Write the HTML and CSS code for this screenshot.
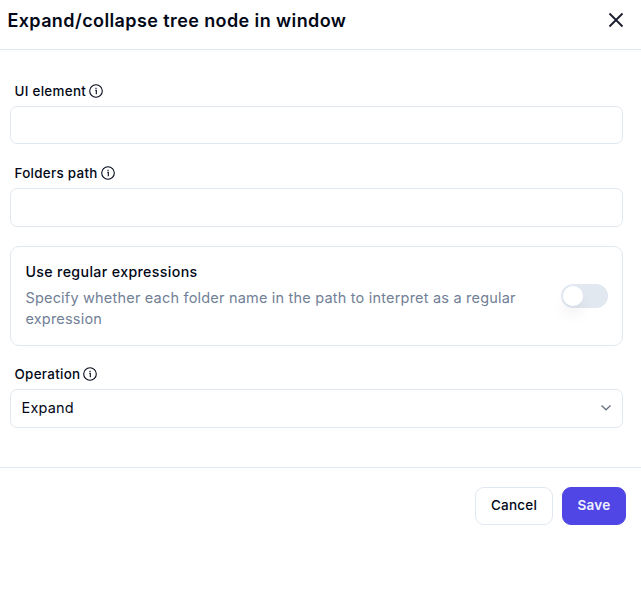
FILE: index.html
```html
<!DOCTYPE html>
<html lang="en">
<head>
<meta charset="utf-8">
<title>Expand/collapse tree node in window</title>
<link rel="stylesheet" href="styles.css">
</head>
<body>
<header class="header">
  <h1 class="title">Expand/collapse tree node in window</h1>
  <button class="close" aria-label="Close"><svg width="16" height="16" viewBox="0 0 16 16"><path d="M1.5 1.5l13 13M14.5 1.5l-13 13"/></svg></button>
</header>
<main class="form">
  <div class="label">UI element <svg class="info" viewBox="0 0 14 14"><circle cx="7" cy="7" r="6.3"/><path d="M6.2 6.3h1.1v3.9M7 3.7v1.2"/></svg></div>
  <div class="field first"></div>
  <div class="label">Folders path <svg class="info" viewBox="0 0 14 14"><circle cx="7" cy="7" r="6.3"/><path d="M6.2 6.3h1.1v3.9M7 3.7v1.2"/></svg></div>
  <div class="field"></div>
  <section class="card">
    <div class="copy">
      <h2 class="card-title">Use regular expressions</h2>
      <p class="description">Specify whether each folder name in the path to interpret as a regular expression</p>
    </div>
    <div class="switch"><span class="thumb"></span></div>
  </section>
  <div class="label">Operation <svg class="info" viewBox="0 0 14 14"><circle cx="7" cy="7" r="6.3"/><path d="M6.2 6.3h1.1v3.9M7 3.7v1.2"/></svg></div>
  <div class="field select"><span>Expand</span><svg class="chevron" viewBox="0 0 12 8"><path d="M1.5 1.5l4.5 4.3 4.5-4.3"/></svg></div>
</main>
<footer class="footer">
  <button class="button cancel">Cancel</button>
  <button class="button save">Save</button>
</footer>
</body>
</html>
```
FILE: styles.css
```css
* { box-sizing: border-box; }
body { margin: 0; background: #fff; color: #020817; font-family: Inter, sans-serif; }
h1, h2, p { margin: 0; }
button { font-family: inherit; }
svg { fill: none; stroke: currentColor; }
.header { height: 50px; display: flex; align-items: flex-start; justify-content: space-between; padding: 8px 17px 0 7.4px; border-bottom: 1px solid #e2e8f0; }
.title { font-size: 18px; line-height: 25px; font-weight: 600; letter-spacing: 0.4px; }
.close { display: flex; border: 0; padding: 0; margin-top: 4px; background: none; color: #1c2030; }
.close svg { stroke-width: 1.9; }
.form { height: 418px; padding: 31px 18px 0 10px; border-bottom: 1px solid #e2e8f0; }
.label { display: flex; align-items: center; gap: 3px; height: 20px; margin-bottom: 5px; padding-left: 4.5px; font-size: 13.4px; font-weight: 500; letter-spacing: 0.3px; }
.info { width: 14px; height: 14px; stroke-width: 1.1; }
.field { height: 39px; margin-bottom: 19px; border: 1px solid #e2e8f0; border-radius: 7px; }
.first { height: 38px; }
.card { display: flex; align-items: center; justify-content: space-between; height: 100px; margin-bottom: 18px; padding: 0 14px 0 14.4px; border: 1px solid #e2e8f0; border-radius: 9px; }
.copy { width: 510px; }
.card-title { font-size: 14.2px; line-height: 20px; font-weight: 500; letter-spacing: 0.36px; margin-bottom: 5px; padding-top: 1px; }
.description { color: #718096; font-size: 14.5px; line-height: 21px; letter-spacing: 0.2px; margin-bottom: 2px; }
.switch { width: 47px; height: 24px; padding: 2px; border-radius: 12px; background: #e2e8f0; }
.thumb { display: block; width: 20px; height: 20px; border-radius: 50%; background: #fff; box-shadow: 0 10px 15px -3px rgb(0 0 0 / 10%); }
.select { display: flex; align-items: center; justify-content: space-between; padding: 0 10px 2px 10.5px; font-size: 14.5px; letter-spacing: 0.2px; }
.chevron { width: 12px; height: 8px; color: #6b7280; stroke-width: 1.3; }
.footer { display: flex; justify-content: flex-end; gap: 9px; padding: 19px 15px 0 0; }
.button { height: 38px; border: 1px solid #e2e8f0; border-radius: 9px; background: #fff; font-size: 13.5px; font-weight: 500; letter-spacing: 0.2px; color: #020817; padding: 0 0 2px; }
.cancel { width: 78px; }
.save { width: 64px; border-color: #4f46e5; background: #4f46e5; color: #f0f1ff; font-weight: 600; }
```
